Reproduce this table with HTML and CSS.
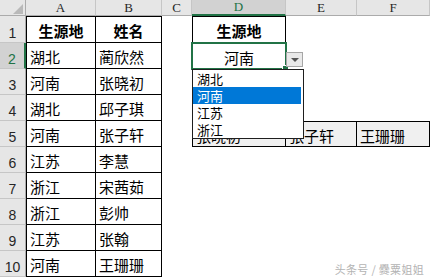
FILE: index.html
```html
<!DOCTYPE html>
<html lang="zh">
<head>
<meta charset="utf-8">
<link rel="stylesheet" href="styles.css">
</head>
<body>
<div class="sheet">
  <div class="hd corner"><span class="tri"></span></div>
  <div class="hd col">A</div>
  <div class="hd col">B</div>
  <div class="hd col">C</div>
  <div class="hd col sel">D</div>
  <div class="hd col">E</div>
  <div class="hd col">F</div>

  <div class="hd row">1</div>
  <div class="c b bl bt bold center">生源地</div>
  <div class="c b bt bold center">姓名</div>
  <div class="c"></div>
  <div class="c b bl bt bold center">生源地</div>
  <div class="c"></div>
  <div class="c"></div>

  <div class="hd row sel">2</div>
  <div class="c b bl">湖北</div>
  <div class="c b">蔺欣然</div>
  <div class="c"></div>
  <div class="c active center">河南</div>
  <div class="c"></div>
  <div class="c"></div>

  <div class="hd row">3</div>
  <div class="c b bl">河南</div>
  <div class="c b">张晓初</div>
  <div class="c"></div>
  <div class="c"></div>
  <div class="c"></div>
  <div class="c"></div>

  <div class="hd row">4</div>
  <div class="c b bl">湖北</div>
  <div class="c b">邱子琪</div>
  <div class="c"></div>
  <div class="c"></div>
  <div class="c"></div>
  <div class="c"></div>

  <div class="hd row">5</div>
  <div class="c b bl">河南</div>
  <div class="c b">张子轩</div>
  <div class="c"></div>
  <div class="c b bl bt res">张晓初</div>
  <div class="c b bt res">张子轩</div>
  <div class="c b bt res">王珊珊</div>

  <div class="hd row">6</div>
  <div class="c b bl">江苏</div>
  <div class="c b">李慧</div>
  <div class="c"></div>
  <div class="c"></div>
  <div class="c"></div>
  <div class="c"></div>

  <div class="hd row">7</div>
  <div class="c b bl">浙江</div>
  <div class="c b">宋茜茹</div>
  <div class="c"></div>
  <div class="c"></div>
  <div class="c"></div>
  <div class="c"></div>

  <div class="hd row">8</div>
  <div class="c b bl">浙江</div>
  <div class="c b">彭帅</div>
  <div class="c"></div>
  <div class="c"></div>
  <div class="c"></div>
  <div class="c"></div>

  <div class="hd row">9</div>
  <div class="c b bl">江苏</div>
  <div class="c b">张翰</div>
  <div class="c"></div>
  <div class="c"></div>
  <div class="c"></div>
  <div class="c"></div>

  <div class="hd row">10</div>
  <div class="c b bl">河南</div>
  <div class="c b">王珊珊</div>
  <div class="c"></div>
  <div class="c"></div>
  <div class="c"></div>
  <div class="c"></div>
</div>

<div class="dd-btn"><span class="arrow"></span></div>
<ul class="dd-list">
  <li>湖北</li>
  <li class="on">河南</li>
  <li>江苏</li>
  <li>浙江</li>
</ul>

<div class="watermark">头条号 / 爨粟姐姐</div>
</body>
</html>
```

FILE: styles.css
```css
html, body {
  margin: 0;
  padding: 0;
  background: #ffffff;
}
body {
  position: relative;
  width: 430px;
  height: 278px;
  overflow: hidden;
  font-family: "Noto Sans CJK SC", "Noto Sans", sans-serif;
}
.sheet {
  display: grid;
  grid-template-columns: 26px 70px 66px 30px 94px 71px 73px;
  grid-template-rows: 16px 27px repeat(9, 26px);
}
.hd {
  box-sizing: border-box;
  background: #e6e6e6;
  color: #262626;
  display: flex;
  justify-content: center;
}
.col {
  align-items: center;
  font-family: "Liberation Serif", serif;
  font-size: 13px;
  border-right: 1px solid #c6c6c6;
  border-bottom: 1px solid #ababab;
}
.row {
  align-items: flex-end;
  padding-bottom: 2px;
  font-family: "Liberation Sans", sans-serif;
  font-size: 14px;
  line-height: 14px;
  border-bottom: 1px solid #c6c6c6;
  border-right: 1px solid #ababab;
}
.corner {
  position: relative;
  border-right: 1px solid #ababab;
  border-bottom: 1px solid #ababab;
}
.tri {
  position: absolute;
  right: 2px;
  bottom: 1px;
  width: 0;
  height: 0;
  border-left: 10px solid transparent;
  border-bottom: 10px solid #b9b9b9;
}
.col.sel {
  background: #d2d2d2;
  color: #217346;
  border-bottom: 2px solid #217346;
}
.row.sel {
  background: #d2d2d2;
  color: #217346;
  border-right: 2px solid #217346;
}
.c {
  box-sizing: border-box;
  display: flex;
  align-items: center;
  padding: 2px 0 0 3px;
  font-size: 15px;
  line-height: 15px;
  color: #000;
  white-space: nowrap;
  overflow: hidden;
}
.center {
  justify-content: center;
  padding-left: 0;
}
.bold {
  font-weight: 700;
}
.b {
  border-right: 1px solid #000;
  border-bottom: 1px solid #000;
}
.bl {
  border-left: 1px solid #000;
}
.bt {
  border-top: 1px solid #000;
}
.res {
  background: #f0f0f0;
}
.active {
  position: relative;
  overflow: visible;
  outline: 2px solid #217346;
  outline-offset: -1px;
}
.active::after {
  content: "";
  position: absolute;
  right: -3px;
  bottom: -3px;
  width: 5px;
  height: 5px;
  background: #217346;
  border: 1px solid #fff;
}
.dd-btn {
  position: absolute;
  left: 286px;
  top: 52px;
  width: 17px;
  height: 15px;
  box-sizing: border-box;
  background: #e9e9e9;
  border: 1px solid #a6a6a6;
  display: flex;
  align-items: center;
  justify-content: center;
}
.arrow {
  width: 0;
  height: 0;
  border-left: 4px solid transparent;
  border-right: 4px solid transparent;
  border-top: 4px solid #555;
  margin-top: 1px;
}
.dd-list {
  position: absolute;
  left: 192px;
  top: 69px;
  width: 112px;
  margin: 0;
  padding: 0 2px 0 0;
  box-sizing: border-box;
  list-style: none;
  background: #fff;
  border: 1px solid #1e1e1e;
}
.dd-list li {
  height: 17px;
  display: flex;
  align-items: center;
  padding-left: 4px;
  font-size: 13px;
  line-height: 13px;
  color: #000;
}
.dd-list li.on {
  background: #0078d7;
  color: #fff;
}
.watermark {
  position: absolute;
  right: 6px;
  bottom: 3px;
  font-size: 11px;
  line-height: 12px;
  color: #b4b4b4;
  letter-spacing: 0.3px;
}
```
